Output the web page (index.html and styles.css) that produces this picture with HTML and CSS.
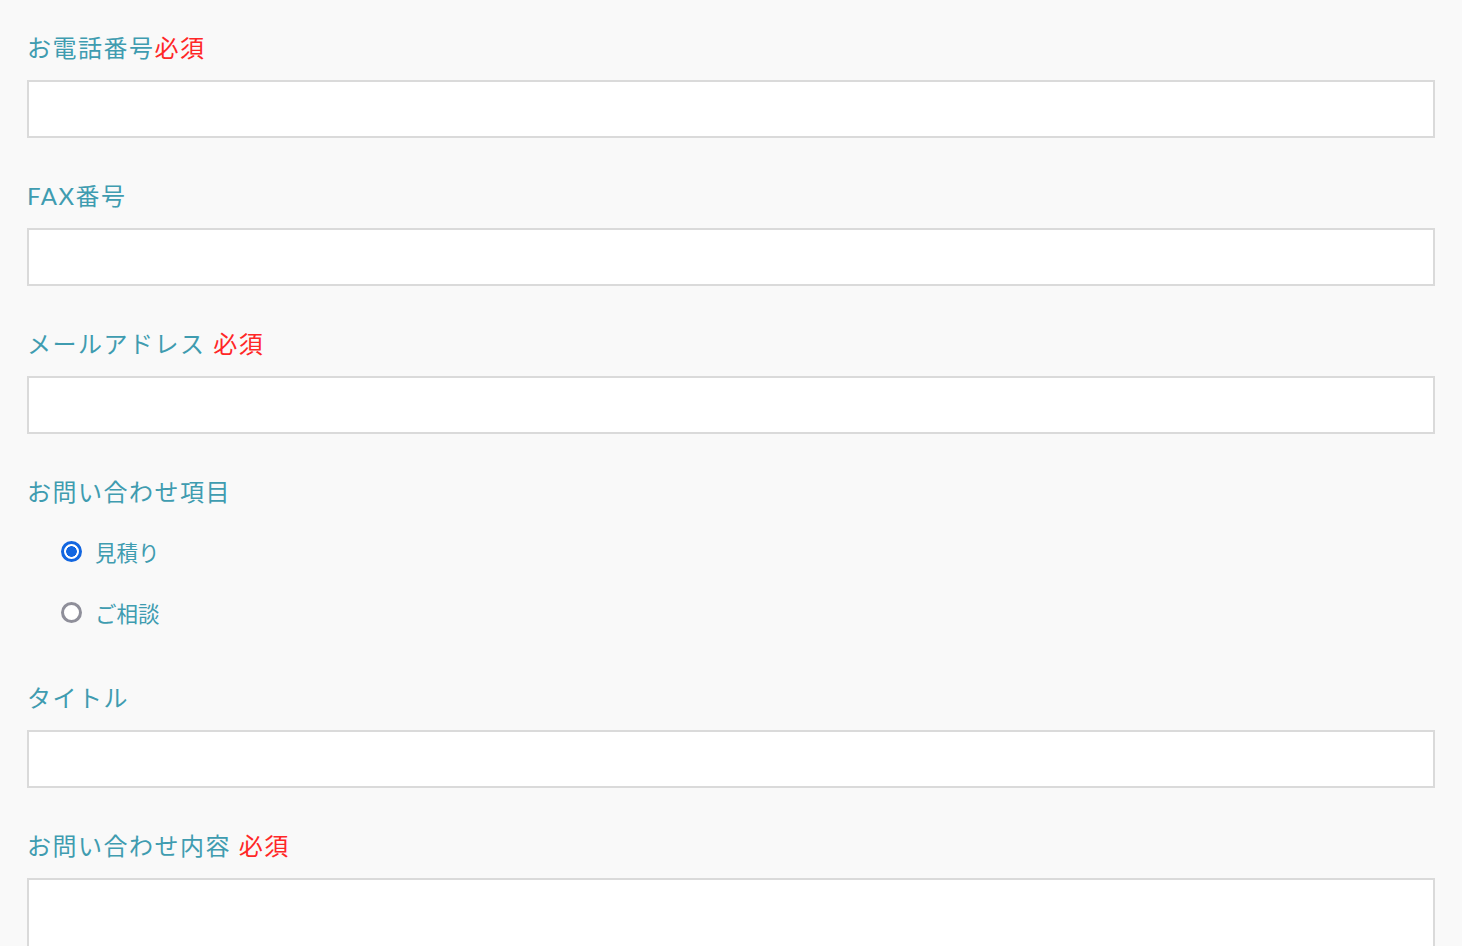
FILE: index.html
```html
<!DOCTYPE html>
<html lang="ja">
<head>
<meta charset="utf-8">
<link rel="stylesheet" href="styles.css">
</head>
<body>
<form class="form">
  <div class="field">
    <label class="label">お電話番号<span class="req">必須</span></label>
    <input class="input" type="text">
  </div>
  <div class="field">
    <label class="label">FAX番号</label>
    <input class="input" type="text">
  </div>
  <div class="field">
    <label class="label">メールアドレス <span class="req">必須</span></label>
    <input class="input" type="text">
  </div>
  <div class="field field-radio">
    <label class="label">お問い合わせ項目</label>
    <div class="radios">
      <label class="radio"><input type="radio" name="kind" checked><span>見積り</span></label>
      <label class="radio"><input type="radio" name="kind"><span>ご相談</span></label>
    </div>
  </div>
  <div class="field">
    <label class="label">タイトル</label>
    <input class="input" type="text">
  </div>
  <div class="field">
    <label class="label">お問い合わせ内容 <span class="req">必須</span></label>
    <textarea class="input textarea"></textarea>
  </div>
</form>
</body>
</html>
```

FILE: styles.css
```css
html, body {
  margin: 0;
  padding: 0;
  background: #f9f9f9;
}
body {
  font-family: "Lato", "Noto Sans CJK JP", sans-serif;
  color: #3f9cb0;
}
.form {
  display: flex;
  flex-direction: column;
  gap: 40px;
  padding: 30px 27px 0 27px;
}
.field {
  display: flex;
  flex-direction: column;
  gap: 14px;
}
.label {
  display: block;
  font-size: 24px;
  line-height: 36px;
  height: 36px;
  letter-spacing: 1.5px;
  color: #3f9cb0;
}
.req {
  color: #ff2727;
}
.input {
  box-sizing: border-box;
  width: 100%;
  height: 58px;
  margin: 0;
  border: 2px solid #dadada;
  background: #fff;
  font: inherit;
  outline: none;
}
.textarea {
  height: 200px;
  resize: none;
}
.field-radio {
  gap: 21px;
  margin-bottom: 8px;
}
.radios {
  display: flex;
  flex-direction: column;
  gap: 21px;
  padding-left: 34px;
}
.radio {
  display: flex;
  align-items: center;
  height: 40px;
  gap: 13px;
  font-size: 21.5px;
  color: #3f9cb0;
}
.radio input {
  appearance: none;
  -webkit-appearance: none;
  box-sizing: border-box;
  width: 21px;
  height: 21px;
  margin: 0;
  border: 3px solid #8f8f9a;
  border-radius: 50%;
  background: #fff;
}
.radio input:checked {
  border-color: #1266e0;
  background: radial-gradient(circle, #1266e0 0 5px, #fff 5.6px);
}
```
